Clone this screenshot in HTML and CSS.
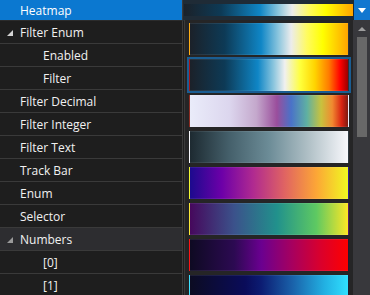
FILE: index.html
```html
<!DOCTYPE html>
<html lang="en">
<head>
    <meta charset="UTF-8">
    <meta name="viewport" content="width=device-width, initial-scale=1.0">
    <title>Property Grid</title>
    <link rel="stylesheet" href="styles.css">
</head>
<body>
    <div class="grid">
        <div class="row first selected">
            <div class="name">Heatmap</div>
            <div class="value">
                <div class="swatch heat"></div>
                <div class="drop">
                    <svg width="8" height="5" viewBox="0 0 8 5"><polygon points="0,0 8,0 4,5" fill="#fff"/></svg>
                </div>
            </div>
        </div>
        <div class="row">
            <div class="name"><span class="expander"><svg width="6" height="6" viewBox="0 0 6 6"><polygon points="6,0 6,6 0,6" fill="#d4d4d4"/></svg></span>Filter Enum</div>
        </div>
        <div class="row"><div class="name child">Enabled</div></div>
        <div class="row"><div class="name child">Filter</div></div>
        <div class="row"><div class="name">Filter Decimal</div></div>
        <div class="row"><div class="name">Filter Integer</div></div>
        <div class="row"><div class="name">Filter Text</div></div>
        <div class="row"><div class="name">Track Bar</div></div>
        <div class="row"><div class="name">Enum</div></div>
        <div class="row"><div class="name">Selector</div></div>
        <div class="row hover">
            <div class="name"><span class="expander"><svg width="6" height="6" viewBox="0 0 6 6"><polygon points="6,0 6,6 0,6" fill="#9a9a9a"/></svg></span>Numbers</div>
        </div>
        <div class="row"><div class="name child">[0]</div></div>
        <div class="row"><div class="name child">[1]</div></div>
    </div>

    <div class="popup">
        <div class="list">
            <div class="item"><div class="swatch heat"></div></div>
            <div class="item active"><div class="swatch heat-red"></div></div>
            <div class="item"><div class="swatch spectral"></div></div>
            <div class="item"><div class="swatch slate"></div></div>
            <div class="item"><div class="swatch plasma"></div></div>
            <div class="item"><div class="swatch viridis"></div></div>
            <div class="item"><div class="swatch magma"></div></div>
            <div class="item"><div class="swatch ocean"></div></div>
        </div>
        <div class="scrollbar">
            <div class="arrow">
                <svg width="8" height="4" viewBox="0 0 8 4"><polygon points="0,4 8,4 4,0" fill="#9e9e9e"/></svg>
            </div>
            <div class="thumb"></div>
        </div>
    </div>
</body>
</html>
```

FILE: styles.css
```css
body {
    margin: 0;
    width: 370px;
    height: 295px;
    overflow: hidden;
    position: relative;
    background: #1e1e1e;
    font-family: "Open Sans", "Noto Sans", sans-serif;
    font-size: 12px;
    color: #f1f1f1;
}
.grid {
    display: flex;
    flex-direction: column;
}
.row {
    display: flex;
    height: 23px;
    box-sizing: border-box;
    flex-shrink: 0;
}
.row.first {
    height: 21px;
}
.name {
    width: 183px;
    box-sizing: border-box;
    display: flex;
    align-items: center;
    padding-left: 20px;
    border-bottom: 1px solid #3a3a3a;
    border-right: 1px solid #3a3a3a;
    white-space: nowrap;
}
.name.child {
    padding-left: 43px;
}
.expander {
    width: 12px;
    margin-left: -13px;
    margin-right: 1px;
    display: flex;
    align-items: center;
    margin-top: 1px;
}
.selected .name {
    background: #0b78d0;
    color: #fff;
    border-bottom-color: #2c2c2c;
}
.hover .name {
    background: #2d2d30;
}
.value {
    flex: 1;
    display: flex;
    background: #1f2b36;
}
.value .swatch {
    flex: 1;
    height: 12px;
    margin: 4px 1px 0 1px;
}
.drop {
    width: 16px;
    height: 20px;
    background: #1177d0;
    display: flex;
    align-items: center;
    justify-content: center;
}
.popup {
    position: absolute;
    top: 20px;
    left: 184px;
    right: 0;
    bottom: 0;
    background: #252526;
    border-left: 1px solid #3a3a3a;
    display: flex;
}
.list {
    flex: 1;
    padding: 1px 2px 0 2px;
}
.item {
    height: 36px;
    box-sizing: border-box;
    border: 2px solid transparent;
}
.item.active {
    border-color: #1a5d92;
}
.item .swatch {
    height: 32px;
    box-sizing: border-box;
    border: 1px solid rgba(255, 255, 255, 0.08);
}
.scrollbar {
    width: 17px;
    background: #38383c;
    display: flex;
    flex-direction: column;
    align-items: center;
}
.arrow {
    height: 17px;
    display: flex;
    align-items: center;
    justify-content: center;
}
.thumb {
    width: 10px;
    height: 100px;
    background: #686868;
}
.heat {
    background: linear-gradient(to right, #1b2129 0%, #0d3a56 22%, #0f86c6 45%, #8cc6de 56%, #ececec 64%, #fffb60 74%, #ffff00 84%, #ffa400 100%);
}
.heat-red {
    background: linear-gradient(to right, #1b2129 0%, #0d3a56 22%, #0f86c6 43%, #8cc6de 53%, #f0f0f0 60%, #ffff3a 70%, #ffd400 79%, #ff7a00 88%, #ff0000 95%, #9a0000 100%);
}
.spectral {
    background: linear-gradient(to right, #eaecfa 0%, #dcd6ee 25%, #c4a8cc 42%, #9a4e9c 55%, #4a72c8 64%, #5fb0a2 74%, #c8c23e 83%, #f08a30 90%, #d82212 96%, #7c1a10 100%);
}
.slate {
    background: linear-gradient(to right, #1d2a31 0%, #45606b 25%, #6c8c97 50%, #b0c0c6 75%, #f8f8fc 100%);
}
.plasma {
    background: linear-gradient(to right, #1c0a8e 0%, #6c00a8 20%, #b02a90 40%, #e06462 60%, #fca636 80%, #f0f921 100%);
}
.viridis {
    background: linear-gradient(to right, #46085c 0%, #3b528b 28%, #21918c 55%, #5ec962 80%, #fde725 100%);
}
.magma {
    background: linear-gradient(to right, #0e0a22 0%, #2c0a52 28%, #6a0090 45%, #a8005e 65%, #d8002e 82%, #ff0000 100%);
}
.ocean {
    background: linear-gradient(to right, #0c0c22 0%, #0a0c5a 35%, #0c1c72 45%, #1a62aa 65%, #22b0e2 85%, #30e0ff 100%);
}
```
